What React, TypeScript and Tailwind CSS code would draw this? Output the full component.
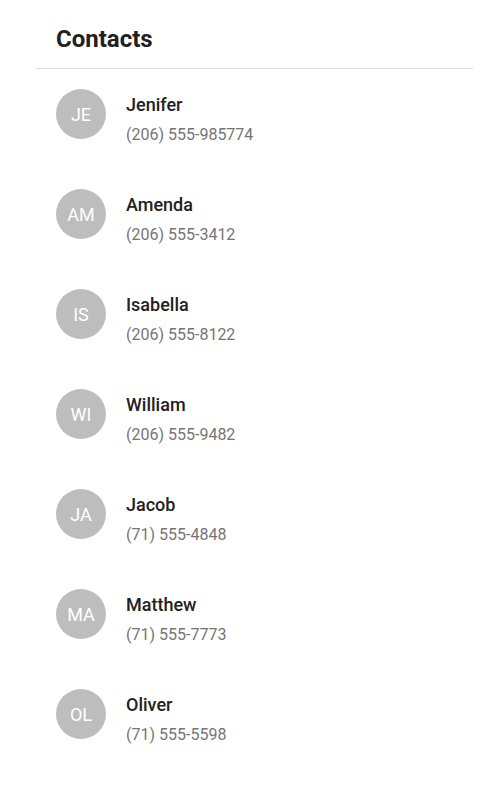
const contacts = [
  { i: "JE", name: "Jenifer", phone: "(206) 555-985774" },
  { i: "AM", name: "Amenda", phone: "(206) 555-3412" },
  { i: "IS", name: "Isabella", phone: "(206) 555-8122" },
  { i: "WI", name: "William", phone: "(206) 555-9482" },
  { i: "JA", name: "Jacob", phone: "(71) 555-4848" },
  { i: "MA", name: "Matthew", phone: "(71) 555-7773" },
  { i: "OL", name: "Oliver", phone: "(71) 555-5598" },
];

export default function App() {
  return (
    <div className="w-[502px] h-[788px] bg-white" style={{ fontFamily: "Roboto, sans-serif" }}>
      <div className="ml-[36px] w-[437px]">
        <div className="h-[69px] pt-[23px] pl-[20px] border-b border-[#e0e0e0] box-border">
          <div className="text-[24px] leading-[32px] font-bold text-[#212121]">Contacts</div>
        </div>
        <div>
          {contacts.map((c) => (
            <div key={c.i} className="flex h-[100px] pt-[20px] pl-[20px] gap-[20px]">
              <div className="w-[50px] h-[50px] rounded-full bg-[#bdbdbd] flex items-center justify-center text-white text-[18px]">
                {c.i}
              </div>
              <div className="flex flex-col pt-[4px]">
                <div className="text-[18px] leading-[24px] font-medium text-[#212121]">{c.name}</div>
                <div className="text-[16px] leading-[24px] mt-[6px] text-[#757575]">{c.phone}</div>
              </div>
            </div>
          ))}
        </div>
      </div>
    </div>
  );
}
